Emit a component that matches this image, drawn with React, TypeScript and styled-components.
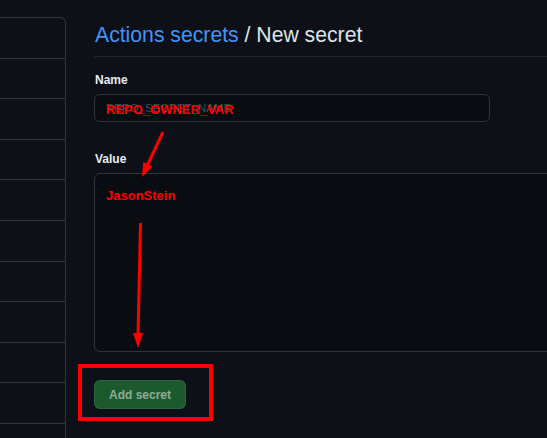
import React from "react";
import styled, { createGlobalStyle } from "styled-components";

const GlobalStyle = createGlobalStyle`
  html, body {
    margin: 0;
    padding: 0;
    background: #0d1117;
    overflow: hidden;
  }
  body {
    width: 547px;
    height: 438px;
    font-family: "Liberation Sans", Arial, sans-serif;
    color: #e6edf3;
  }
  * { box-sizing: border-box; }
`;

const Page = styled.div`
  position: relative;
  display: flex;
  align-items: flex-start;
  width: 547px;
  height: 438px;
  padding-top: 17px;
  overflow: hidden;
  background: #0d1117;
`;

const SideNav = styled.nav`
  flex: 0 0 66px;
  height: 440px;
  border-top: 1px solid #30363d;
  border-right: 1px solid #30363d;
  border-top-right-radius: 6px;
  background: #0d1117;
  display: flex;
  flex-direction: column;
`;

const NavRow = styled.div`
  flex: 0 0 40.6px;
  border-bottom: 1px solid #30363d;
`;

const Main = styled.main`
  flex: 0 0 640px;
  padding-left: 28px;
  display: flex;
  flex-direction: column;
  align-items: flex-start;
`;

const Subhead = styled.h2`
  align-self: stretch;
  margin: 0;
  padding: 0 0 3px 1px;
  font-family: "Liberation Sans", Arial, sans-serif;
  font-weight: 400;
  font-size: 21.2px;
  line-height: 36px;
  color: #dce3ea;
  border-bottom: 1px solid #21262d;
`;

const Crumb = styled.span`
  color: #4493f8;
`;

const Label = styled.label<{ $gap: number }>`
  display: block;
  margin-top: ${(p) => p.$gap}px;
  padding-left: 1px;
  font-size: 12px;
  font-weight: 700;
  line-height: 18px;
  color: #e6edf3;
`;

const NameInput = styled.input`
  margin-top: 5px;
  width: 396px;
  height: 28px;
  padding: 0 11px;
  background: #090c11;
  border: 1px solid #30363d;
  border-radius: 6px;
  font-family: "Liberation Sans", Arial, sans-serif;
  font-size: 11.5px;
  color: #e6edf3;
  outline: none;
  &::placeholder {
    color: #464d57;
  }
`;

const ValueArea = styled.textarea`
  margin-top: 5px;
  width: 520px;
  height: 179px;
  background: #090c11;
  border: 1px solid #30363d;
  border-radius: 6px;
  resize: none;
  outline: none;
`;

const SubmitButton = styled.button`
  margin-top: 28px;
  width: 92px;
  height: 29px;
  padding: 0;
  background: #1c5a2d;
  border: 1px solid rgba(240, 246, 252, 0.08);
  border-radius: 6px;
  color: rgba(255, 255, 255, 0.5);
  font-family: "Liberation Sans", Arial, sans-serif;
  font-size: 12px;
  font-weight: 700;
  cursor: not-allowed;
`;

const Note = styled.span<{ $x: number; $y: number }>`
  position: absolute;
  left: ${(p) => p.$x}px;
  top: ${(p) => p.$y}px;
  font-family: "Liberation Sans", Arial, sans-serif;
  font-weight: 700;
  font-size: 13px;
  line-height: 16px;
  color: #ff0000;
  white-space: nowrap;
  pointer-events: none;
`;

const Marks = styled.svg`
  position: absolute;
  left: 0;
  top: 0;
  pointer-events: none;
`;

export default function App() {
  const rows = Array.from({ length: 11 });
  return (
    <>
      <GlobalStyle />
      <Page>
        <SideNav>
          {rows.map((_, i) => (
            <NavRow key={i} />
          ))}
        </SideNav>
        <Main>
          <Subhead>
            <Crumb>Actions secrets</Crumb> / New secret
          </Subhead>
          <Label $gap={14}>Name</Label>
          <NameInput placeholder="REPO_SECRET_NAME" />
          <Label $gap={28}>Value</Label>
          <ValueArea />
          <SubmitButton disabled>Add secret</SubmitButton>
        </Main>
        <Note $x={106} $y={102}>REPO_OWNER_VAR</Note>
        <Note $x={106} $y={188}>JasonStein</Note>
        <Marks width="547" height="438" viewBox="0 0 547 438">
          <line x1="163" y1="132" x2="147" y2="166" stroke="#ff0000" strokeWidth="3" />
          <polygon points="142,177 152.6,166.6 143.2,162" fill="#ff0000" />
          <line x1="140.5" y1="223" x2="138" y2="336" stroke="#ff0000" strokeWidth="3" />
          <polygon points="133,333 143,333 138,348" fill="#ff0000" />
          <rect x="80" y="366" width="131" height="53" fill="none" stroke="#ff0000" strokeWidth="4" />
        </Marks>
      </Page>
    </>
  );
}
